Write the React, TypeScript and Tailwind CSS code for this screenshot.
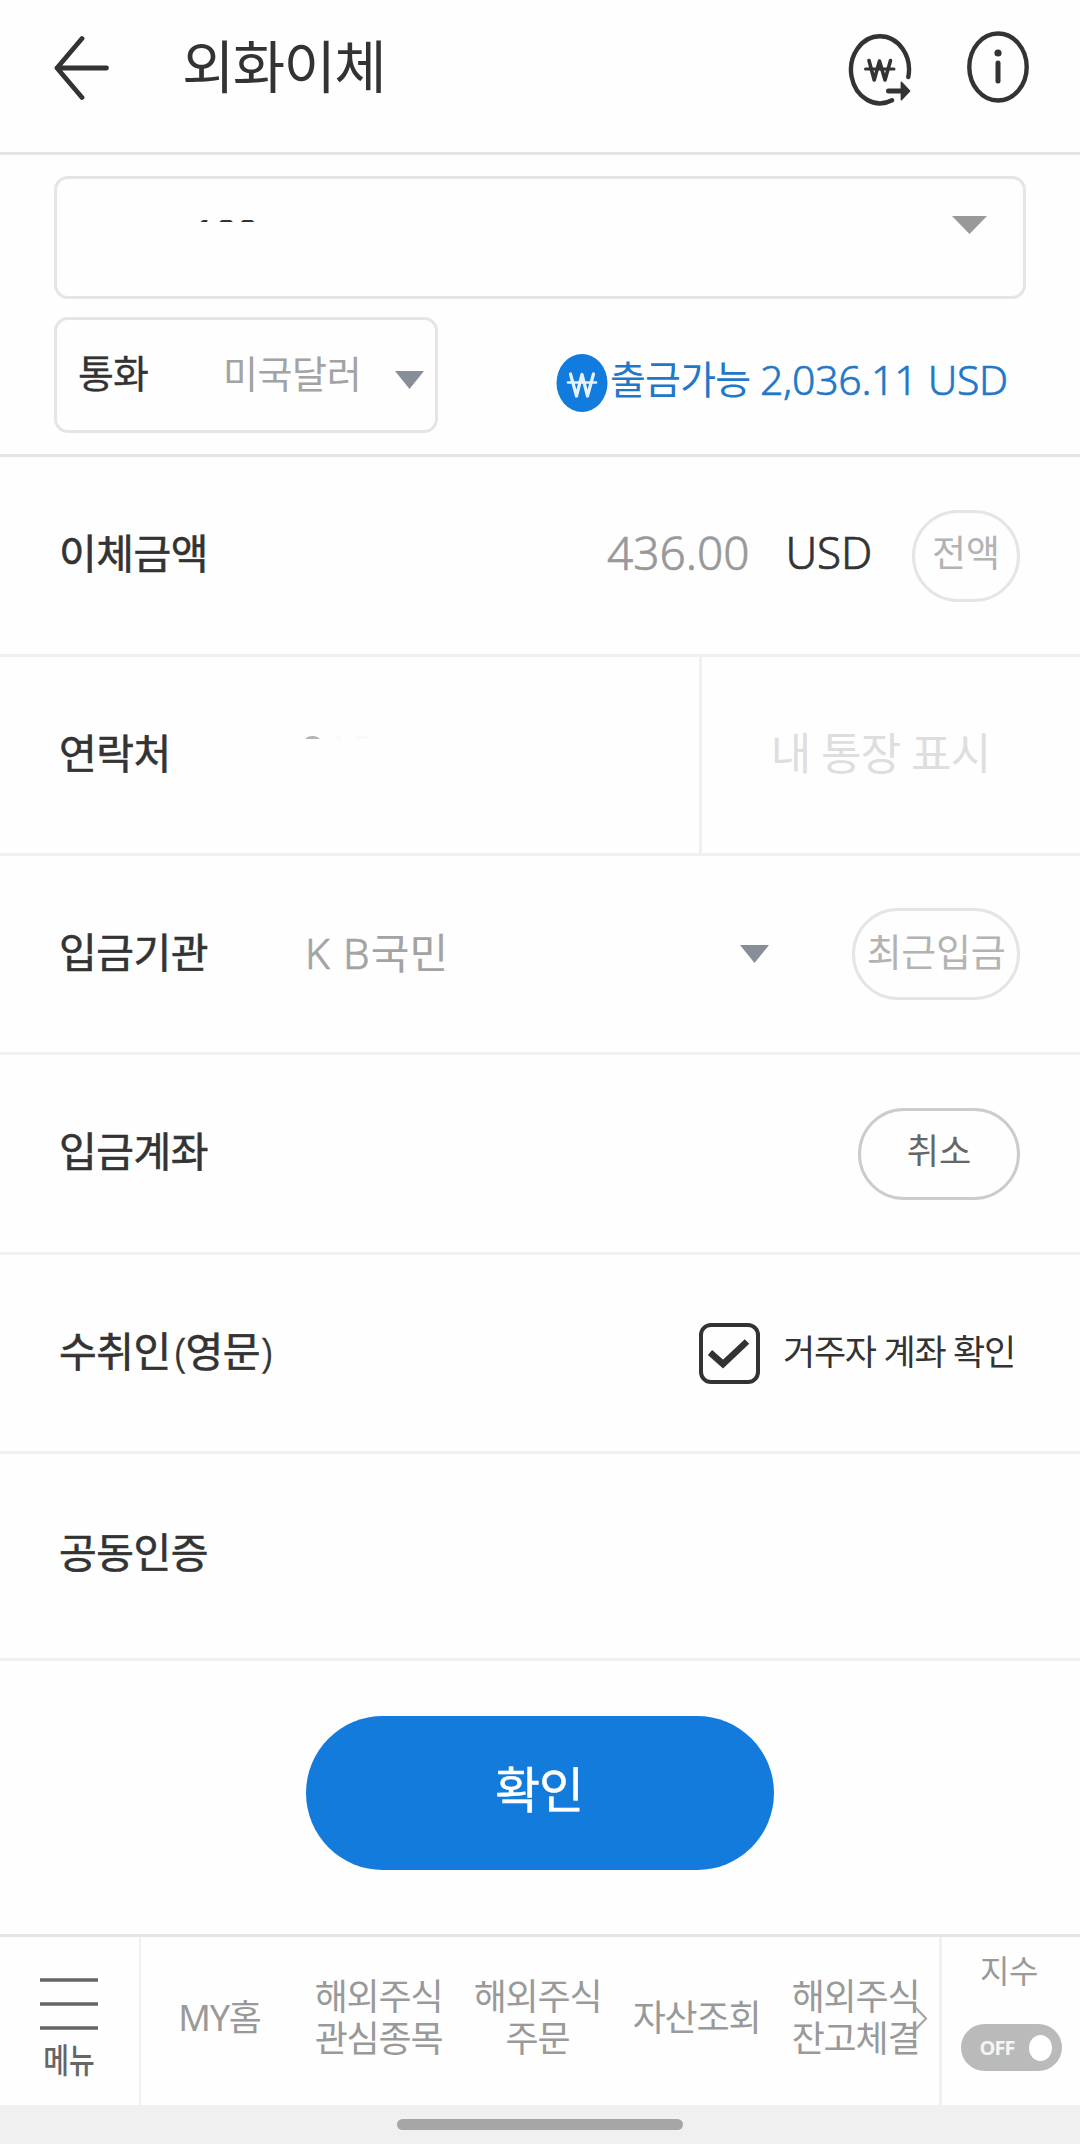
import React from 'react';

type RowProps = {
  label: React.ReactNode;
  className?: string;
  children?: React.ReactNode;
};

const TABS = [
  ['MY홈'],
  ['해외주식', '관심종목'],
  ['해외주식', '주문'],
  ['자산조회'],
  ['해외주식', '잔고체결'],
];

function Caret({ className }: { className?: string }) {
  return (
    <svg viewBox="0 0 30 18" preserveAspectRatio="none" className={className} fill="currentColor">
      <path d="M0 0H30L15 18Z" />
    </svg>
  );
}

function BackIcon() {
  return (
    <svg
      width="56"
      height="66"
      viewBox="0 0 56 66"
      fill="none"
      stroke="#333333"
      strokeWidth="4.8"
      strokeLinecap="round"
      strokeLinejoin="round"
    >
      <path d="M28 3.5L3 33L28 62.5M3 33H52.5" />
    </svg>
  );
}

function WonTransferIcon() {
  return (
    <svg width="64" height="74" viewBox="0 0 64 74" fill="none" stroke="#333333" strokeLinecap="round">
      <path d="M60.3 44A29 33.5 0 1 0 44 67.3" strokeWidth="4.4" />
      <path d="M21 27.5L26.2 47L31.5 28L37 47L42.5 27.5" strokeWidth="3.6" strokeLinejoin="round" />
      <path d="M17.5 36H46" strokeWidth="3" />
      <path d="M40.5 58H54" strokeWidth="5" />
      <path d="M53.5 49.5L61.5 58L53.5 66.5Z" fill="#333333" strokeWidth="1.8" strokeLinejoin="round" />
    </svg>
  );
}

function InfoIcon() {
  return (
    <svg width="62" height="72" viewBox="0 0 62 72" fill="none" stroke="#333333">
      <ellipse cx="31" cy="36" rx="28.7" ry="33.5" strokeWidth="4.4" />
      <circle cx="31" cy="22" r="3.6" fill="#333333" stroke="none" />
      <path d="M31 32V50" strokeWidth="5" strokeLinecap="round" />
    </svg>
  );
}

function WonBadge() {
  return (
    <svg width="52" height="58" viewBox="0 0 52 58" fill="none" strokeLinecap="round">
      <ellipse cx="26" cy="29" rx="25.5" ry="29" fill="#117bde" />
      <path
        d="M14.5 20L20.5 42L26 20.5L31.5 42L37.5 20"
        stroke="#e8f2fc"
        strokeWidth="3.2"
        strokeLinejoin="round"
      />
      <path d="M12 28.5H40" stroke="#e8f2fc" strokeWidth="2.6" />
    </svg>
  );
}

function Row({ label, className = 'h-[199px]', children }: RowProps) {
  return (
    <div className={`flex items-center border-b-[3px] border-[#f0f0f0] pl-[59px] ${className}`}>
      <span className="w-[246px] shrink-0 whitespace-nowrap pb-[5px] text-[41px] leading-[60px] tracking-[-0.5px] [-webkit-text-stroke:0.6px_#333333]">
        {label}
      </span>
      {children}
    </div>
  );
}

export default function App() {
  return (
    <div className="flex h-[2144px] w-[1080px] flex-col overflow-hidden bg-[#fefefe] font-['Noto_Sans','Noto_Sans_CJK_KR',sans-serif] text-[#333333]">
      {/* Header */}
      <header className="flex h-[155px] items-start border-b-[3px] border-[#e5e5e5] pl-[54px] pr-[51px] pt-[31px]">
        <div className="pt-[4px]">
          <BackIcon />
        </div>
        <h1 className="ml-[72px] flex-1 text-[57px] leading-[70px] tracking-[-1.7px]">외화이체</h1>
        <div className="pt-[2px]">
          <WonTransferIcon />
        </div>
        <div className="ml-[55px]">
          <InfoIcon />
        </div>
      </header>

      {/* Account and currency */}
      <section className="h-[302px] border-b-[3px] border-[#e5e5e5] px-[54px] pt-[21px]">
        <div className="flex h-[123px] items-start justify-between rounded-[14px] border-[3px] border-[#e5e5e5] pl-[136px] pr-[36px] pt-[37px]">
          <span className="mt-[4px] h-[2px] overflow-hidden text-[40px] leading-[40px] tracking-[-1.2px]">
            <span className="-mt-[7px] block">100</span>
          </span>
          <Caret className="h-[18px] w-[35px] text-[#999999]" />
        </div>
        <div className="mt-[18px] flex items-start justify-between">
          <div className="flex h-[116px] w-[384px] items-start rounded-[14px] border-[3px] border-[#e5e5e5] pl-[21px] pt-[25px]">
            <span className="w-[145px] text-[39px] leading-[56px] tracking-[-0.8px] [-webkit-text-stroke:0.3px_#333333]">
              통화
            </span>
            <span className="w-[172px] text-[38px] leading-[56px] tracking-[-0.4px] text-[#a3a3a3]">미국달러</span>
            <Caret className="mt-[26px] h-[18px] w-[29px] text-[#888e99]" />
          </div>
          <div className="flex items-center pr-[20px] pt-[33px] text-[#1f78c8]">
            <WonBadge />
            <span className="flex whitespace-nowrap pb-[8px] pl-[2px] text-[39px] leading-[58px]">
              <span className="w-[150px] tracking-[-0.8px]">출금가능</span>
              <span className="w-[246px] text-[41px] font-light tracking-[-0.3px] [-webkit-text-stroke:0.6px_#1f78c8]">
                2,036.11 USD
              </span>
            </span>
          </div>
        </div>
      </section>

      {/* Transfer form */}
      <main className="flex-1">
        <Row label="이체금액" className="h-[200px]">
          <div className="flex flex-1 items-center justify-end pr-[60px]">
            <span className="pb-[7px] text-[46px] font-light leading-[60px] text-[#999999] [-webkit-text-stroke:0.7px_#999999]">
              436.00
            </span>
            <span className="ml-[36px] pb-[7px] text-[44px] font-light leading-[60px] tracking-[-0.2px] [-webkit-text-stroke:0.7px_#333333]">
              USD
            </span>
            <button className="ml-[40px] h-[92px] w-[108px] rounded-full border-[3px] border-[#e5e5e5] pb-[6px] text-[37px] text-[#b3b3b3]">
              전액
            </button>
          </div>
        </Row>
        <Row label="연락처">
          <div className="h-full w-[394px] pt-[78px]">
            <div className="h-[4px] overflow-hidden text-[44px] leading-[44px] text-[#f9f9f9]">
              <span className="-ml-[5px] -mt-[7px] block">
                <span className="text-[#b3b3b3]">0</span>10
              </span>
            </div>
          </div>
          <div className="flex h-full flex-1 items-center justify-center border-l-[3px] border-[#f0f0f0] pb-[5px] pr-[21px] text-[44px] tracking-[-0.8px] text-[#dedede]">
            내 통장 표시
          </div>
        </Row>
        <Row label="입금기관">
          <div className="flex flex-1 items-center pr-[60px]">
            <span className="w-[435px] pb-[3px] text-[42px] leading-[60px] text-[#a3a3a3]">
              <span className="font-light tracking-[1.2px] [-webkit-text-stroke:0.7px_#a3a3a3]">K B</span>국민
            </span>
            <Caret className="h-[18px] w-[29px] text-[#888e99]" />
            <button className="ml-auto h-[92px] w-[168px] whitespace-nowrap rounded-full border-[3px] border-[#e5e5e5] pb-[6px] text-[38px] tracking-[-0.3px] text-[#b3b3b3]">
              최근입금
            </button>
          </div>
        </Row>
        <Row label="입금계좌" className="h-[200px]">
          <div className="flex flex-1 justify-end pr-[60px]">
            <button className="h-[92px] w-[162px] rounded-full border-[3px] border-[#cccccc] pb-[4px] text-[35px] text-[#666666]">
              취소
            </button>
          </div>
        </Row>
        <Row
          label={
            <>
              수취인<span className="ml-[4px] font-light">(</span>영문<span className="ml-[1px] font-light">)</span>
            </>
          }
        >
          <label className="flex flex-1 items-center pl-[394px]">
            <svg width="61" height="61" viewBox="0 0 61 61" fill="none" stroke="#333333">
              <rect x="2" y="2" width="57" height="57" rx="10" strokeWidth="4" />
              <path d="M11 29.5L24 41L48 18.5" strokeWidth="6.5" />
            </svg>
            <span className="whitespace-nowrap pb-[2px] pl-[23px] text-[35px] leading-[60px] tracking-[-1.3px]">
              거주자 계좌 확인
            </span>
          </label>
        </Row>
        <Row label="공동인증" className="h-[207px] pb-[3px]" />
        <div className="flex justify-center pt-[55px]">
          <button className="h-[154px] w-[468px] rounded-full bg-[#127bdc] pb-[7px] pr-[2px] text-[49px] tracking-[-1px] text-white [-webkit-text-stroke:0.5px_#ffffff]">
            확인
          </button>
        </div>
      </main>

      {/* Bottom navigation */}
      <nav className="flex h-[171px] shrink-0 border-t-[3px] border-[#e5e5e5] text-[#999999]">
        <div className="flex w-[141px] flex-col items-center border-r-2 border-[#f0f0f0] pr-[1px] pt-[41px] text-[#666666]">
          <svg width="58" height="52" viewBox="0 0 58 52" stroke="currentColor" strokeWidth="3.6">
            <path d="M0 2H58M0 26H58M0 50H58" />
          </svg>
          <span className="mt-[10px] scale-y-[1.22] text-[28px] font-medium leading-[40px]">메뉴</span>
        </div>
        <div className="relative flex w-[798px]">
          {TABS.map((lines) => (
            <div
              key={lines.join('')}
              className="flex w-[159px] flex-col items-center justify-center pb-[7px] pr-[2px] text-[36px] leading-[42px] tracking-[-1.2px]"
            >
              {lines.map((line) => (
                <span key={line} className="whitespace-nowrap">
                  {line}
                </span>
              ))}
            </div>
          ))}
          <svg
            className="absolute left-[772px] top-[68px]"
            width="16"
            height="28"
            viewBox="0 0 16 28"
            fill="none"
            stroke="#a6a6a6"
            strokeWidth="2.2"
          >
            <path d="M2 2L13 13.5L2 25" />
          </svg>
        </div>
        <div className="flex flex-1 flex-col items-center border-l-[3px] border-[#f0f0f0] pt-[11px]">
          <span className="pr-[4px] text-[32px] leading-[46px] tracking-[-0.5px]">지수</span>
          <div className="mt-[30px] flex h-[47px] w-[101px] items-center justify-between rounded-full bg-[#bababa] pl-[19px] pr-[10px]">
            <span className="font-['Open_Sans',sans-serif] text-[20px] font-bold tracking-[-1px] text-[#f5f5f5]">
              OFF
            </span>
            <span className="h-[26px] w-[23px] rounded-[50%] bg-white" />
          </div>
        </div>
      </nav>

      {/* System gesture bar */}
      <footer className="flex h-[39px] shrink-0 justify-center bg-[#f0f0f0] pt-[14px]">
        <div className="h-[11px] w-[286px] rounded-full bg-[#a6a6a6]" />
      </footer>
    </div>
  );
}
